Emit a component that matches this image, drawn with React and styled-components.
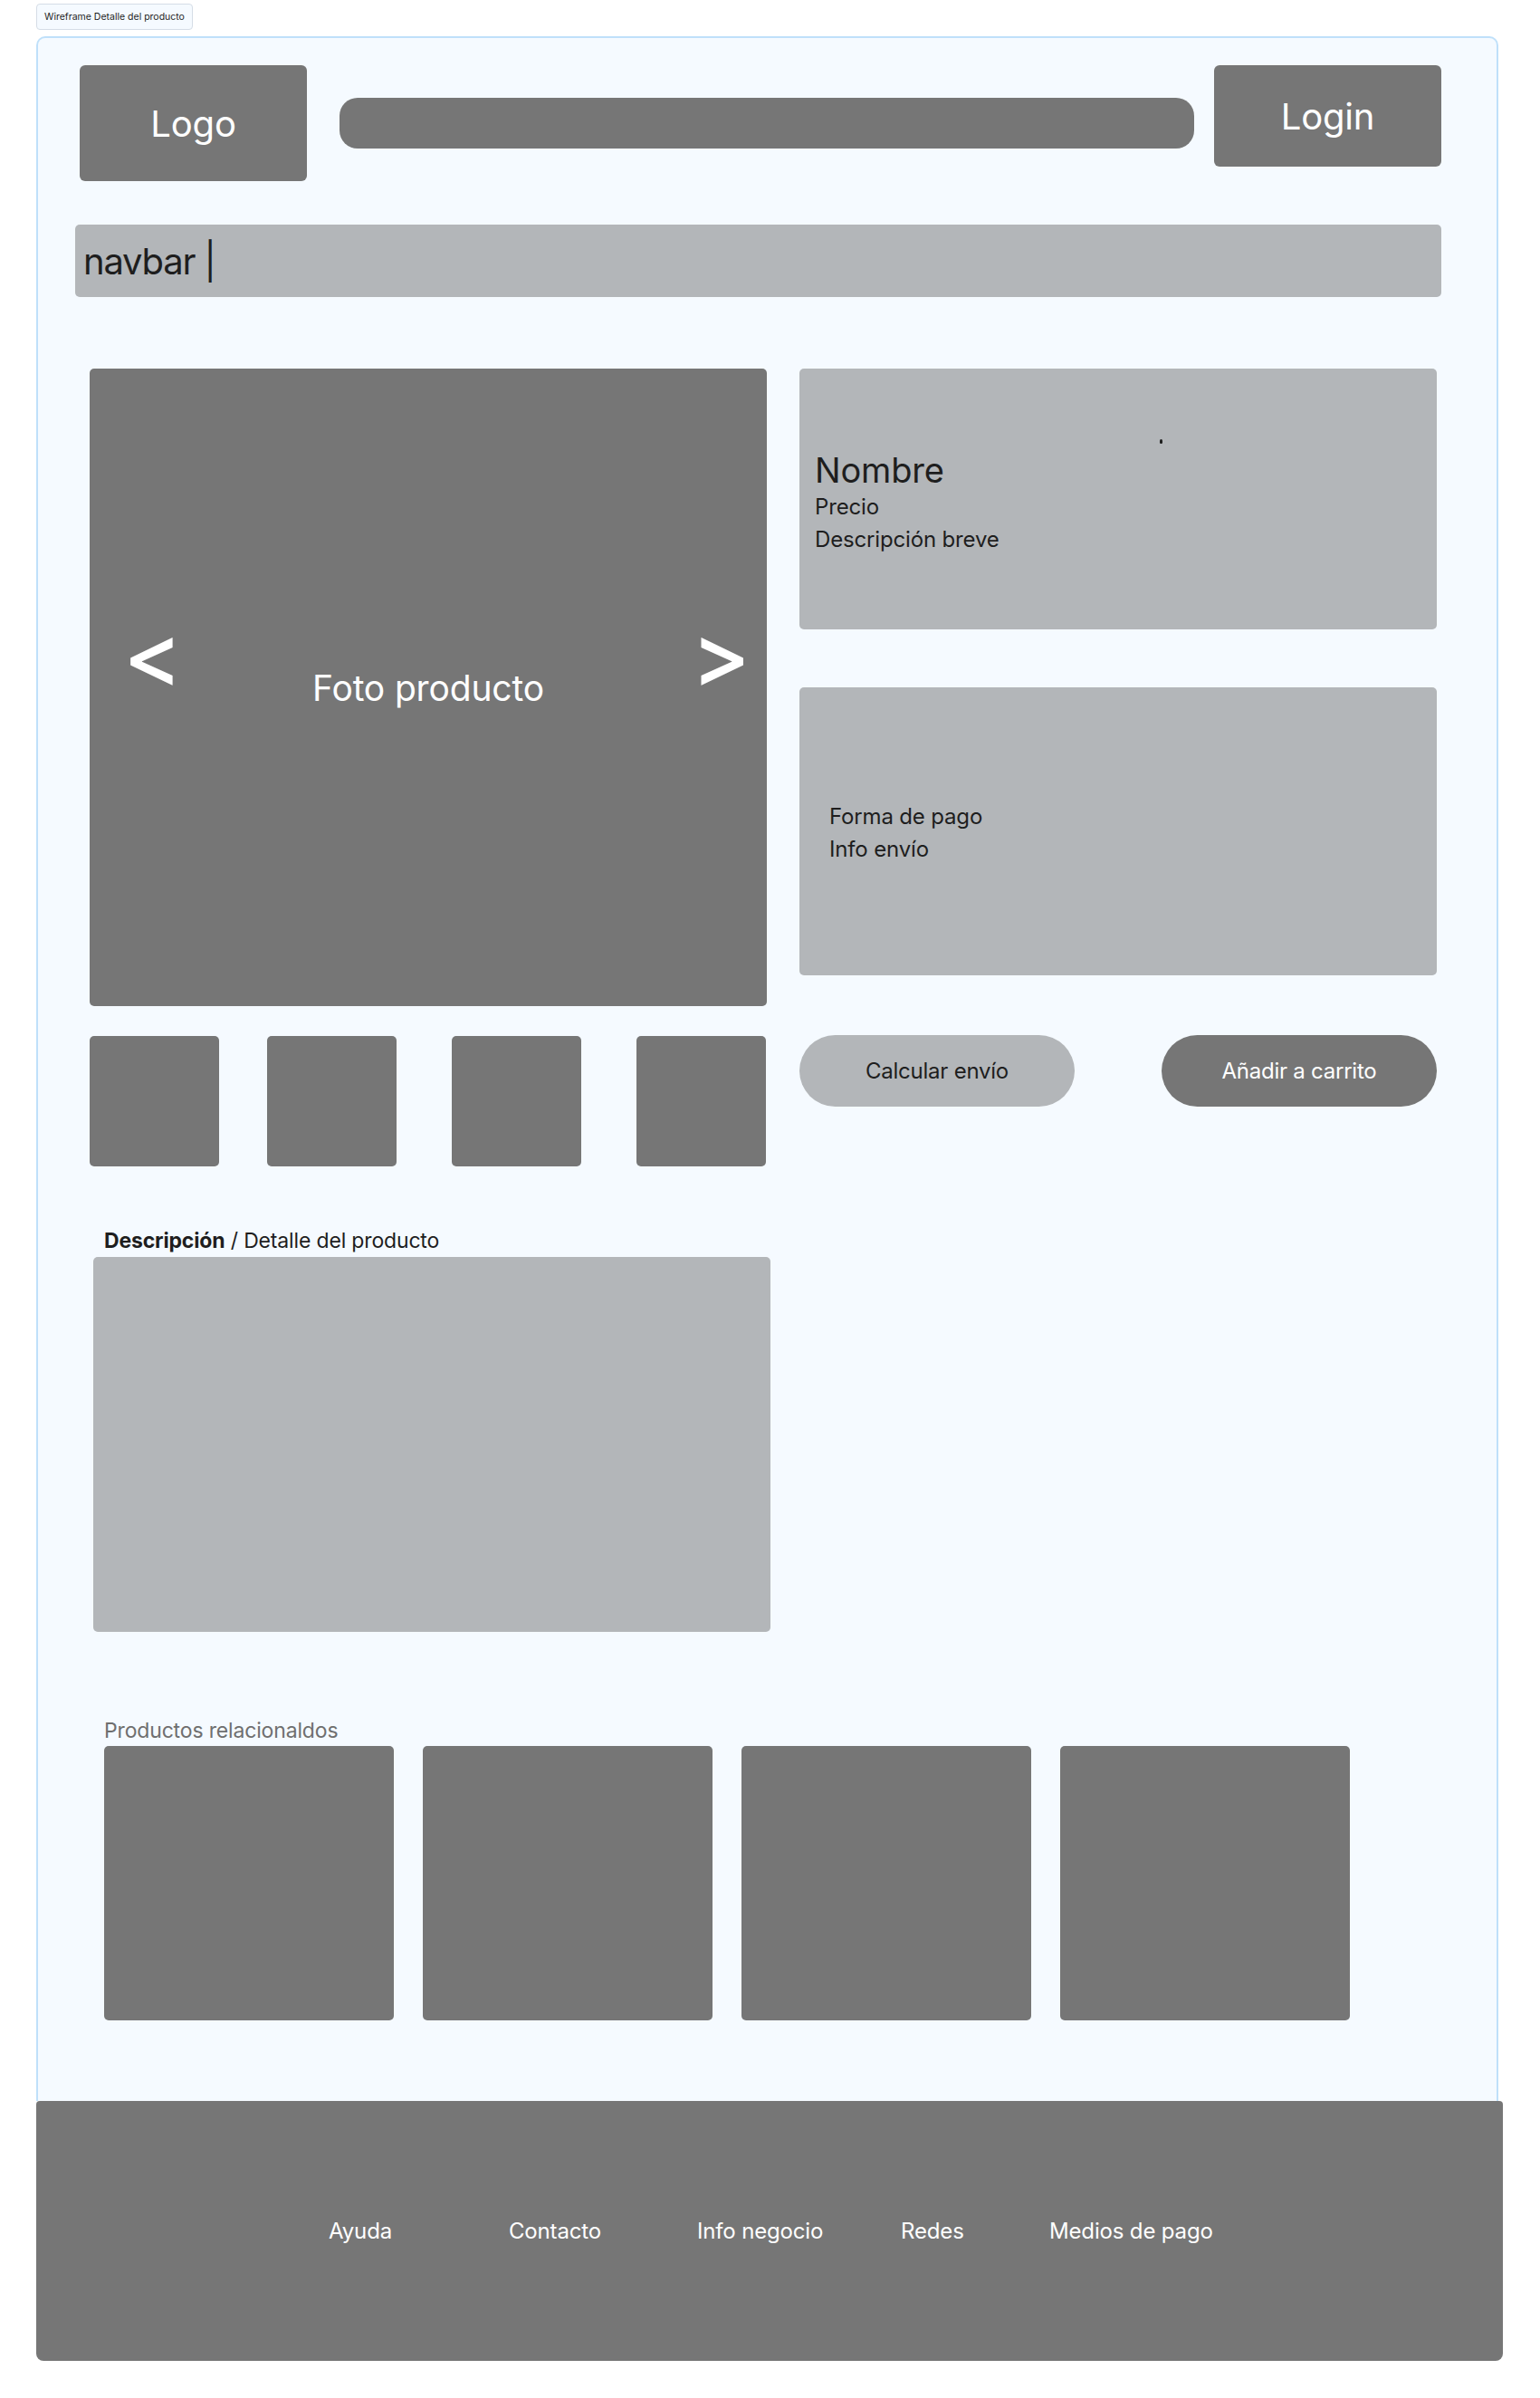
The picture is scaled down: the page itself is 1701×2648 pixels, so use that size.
import React from 'react';
import styled, { createGlobalStyle } from 'styled-components';

const GlobalStyle = createGlobalStyle`
  body {
    margin: 0;
    background: #ffffff;
    font-family: Inter, "Noto Sans", sans-serif;
    color: #1e1e1e;
    letter-spacing: -0.01em;
  }
`;

const Page = styled.div`
  width: 1701px;
  padding-top: 4px;
`;

const FrameLabel = styled.div`
  margin-left: 40px;
  width: 173px;
  height: 29px;
  box-sizing: border-box;
  display: flex;
  align-items: center;
  justify-content: center;
  font-size: 10.5px;
  letter-spacing: 0;
  color: #1e1e1e;
  background: #f5faff;
  border: 1px solid #d5dde6;
  border-radius: 4px;
`;

const Frame = styled.div`
  margin: 7px 0 0 40px;
  width: 1615px;
  box-sizing: border-box;
  background: #f5faff;
  border: 2px solid #bfe0fa;
  border-bottom: none;
  border-radius: 10px 10px 0 0;
  padding: 30px 61px 89px 41px;
`;

const HeaderRow = styled.div`
  display: flex;
  align-items: flex-start;
  margin-left: 5px;
`;

const DarkBlock = styled.div`
  background: #767676;
  color: #ffffff;
  border-radius: 6px;
  display: flex;
  align-items: center;
  justify-content: center;
  font-size: 40px;
  width: ${p => p.$w}px;
  height: ${p => p.$h}px;
  flex-shrink: 0;
`;

const SearchBar = styled.div`
  flex: 1;
  height: 56px;
  margin: 36px 22px 0 36px;
  background: #767676;
  border-radius: 20px;
`;

const Navbar = styled.div`
  margin-top: 48px;
  height: 80px;
  background: #b3b6b9;
  border-radius: 5px;
  display: flex;
  align-items: center;
  padding-left: 9px;
  font-size: 40px;
  letter-spacing: -0.03em;
  color: #1e1e1e;
`;

const ProductSection = styled.div`
  margin-top: 79px;
  padding-left: 16px;
  display: flex;
  gap: 36px;
  align-items: flex-start;
`;

const LeftColumn = styled.div`
  width: 748px;
  display: flex;
  flex-direction: column;
`;

const Photo = styled.div`
  position: relative;
  height: 704px;
  background: #767676;
  border-radius: 5px;
  display: flex;
  align-items: center;
  justify-content: center;
  color: #ffffff;
  font-size: 39px;
`;

const Arrow = styled.span`
  position: absolute;
  top: 267px;
  ${p => (p.$side === 'left' ? 'left: 37px;' : 'right: 18px;')}
  font-size: 98px;
  font-weight: 500;
  line-height: 100px;
  color: #ffffff;
`;

const Thumbs = styled.div`
  margin-top: 33px;
  display: flex;
`;

const Thumb = styled.div`
  width: 143px;
  height: 144px;
  margin-left: ${p => p.$ml}px;
  background: #767676;
  border-radius: 5px;
`;

const RightColumn = styled.div`
  width: 704px;
  display: flex;
  flex-direction: column;
`;

const InfoCard = styled.div`
  position: relative;
  box-sizing: border-box;
  height: ${p => p.$h}px;
  margin-top: ${p => p.$mt || 0}px;
  background: #b3b6b9;
  border-radius: 5px;
  padding: ${p => p.$pt}px 0 0 ${p => p.$pl}px;
`;

const Stray = styled.span`
  position: absolute;
  left: 398px;
  top: 78px;
  width: 3px;
  height: 5px;
  border-radius: 2px;
  background: #1e1e1e;
`;

const ProductName = styled.div`
  font-size: 38px;
  line-height: 46px;
`;

const InfoLine = styled.div`
  font-size: 24px;
  line-height: 36px;
`;

const Buttons = styled.div`
  margin-top: 66px;
  display: flex;
  justify-content: space-between;
`;

const PillButton = styled.button`
  width: 304px;
  height: 79px;
  border: none;
  border-radius: 40px;
  font-family: Inter, "Noto Sans", sans-serif;
  font-size: 24px;
  letter-spacing: -0.01em;
  background: ${p => (p.$dark ? '#767676' : '#b3b6b9')};
  color: ${p => (p.$dark ? '#ffffff' : '#1e1e1e')};
`;

const SectionTitle = styled.div`
  margin-top: ${p => p.$mt}px;
  padding-left: 32px;
  font-size: 23px;
  line-height: 28px;
  color: ${p => p.$color || '#1e1e1e'};

  strong {
    font-weight: 700;
  }
`;

const DescriptionBox = styled.div`
  margin: 4px 0 0 20px;
  width: 748px;
  height: 414px;
  background: #b3b6b9;
  border-radius: 5px;
`;

const Related = styled.div`
  margin-top: 3px;
  padding-left: 32px;
  display: flex;
  gap: 32px;
`;

const RelatedCard = styled.div`
  width: 320px;
  height: 303px;
  background: #767676;
  border-radius: 5px;
`;

const Footer = styled.footer`
  margin-left: 40px;
  width: 1620px;
  height: 287px;
  box-sizing: border-box;
  background: #767676;
  border-radius: 4px 4px 8px 8px;
  display: flex;
  align-items: center;
  padding-left: 323px;
`;

const FooterLink = styled.span`
  width: ${p => p.$w}px;
  flex-shrink: 0;
  font-size: 24px;
  color: #ffffff;
`;

const thumbMargins = [0, 53, 61, 61];

const footerLinks = [
  { label: 'Ayuda', w: 199 },
  { label: 'Contacto', w: 208 },
  { label: 'Info negocio', w: 225 },
  { label: 'Redes', w: 164 },
  { label: 'Medios de pago', w: 200 },
];

const App = () => {
  return (
    <Page>
      <GlobalStyle />
      <FrameLabel>Wireframe Detalle del producto</FrameLabel>
      <Frame>
        <HeaderRow>
          <DarkBlock $w={251} $h={128}>Logo</DarkBlock>
          <SearchBar />
          <DarkBlock $w={251} $h={112}>Login</DarkBlock>
        </HeaderRow>

        <Navbar>navbar |</Navbar>

        <ProductSection>
          <LeftColumn>
            <Photo>
              <Arrow $side="left">&lt;</Arrow>
              Foto producto
              <Arrow $side="right">&gt;</Arrow>
            </Photo>
            <Thumbs>
              {thumbMargins.map((ml, i) => (
                <Thumb key={i} $ml={ml} />
              ))}
            </Thumbs>
          </LeftColumn>

          <RightColumn>
            <InfoCard $h={288} $pt={89} $pl={17}>
              <Stray />
              <ProductName>Nombre</ProductName>
              <InfoLine>Precio</InfoLine>
              <InfoLine>Descripción breve</InfoLine>
            </InfoCard>
            <InfoCard $h={318} $mt={64} $pt={125} $pl={33}>
              <InfoLine>Forma de pago</InfoLine>
              <InfoLine>Info envío</InfoLine>
            </InfoCard>
            <Buttons>
              <PillButton>Calcular envío</PillButton>
              <PillButton $dark>Añadir a carrito</PillButton>
            </Buttons>
          </RightColumn>
        </ProductSection>

        <SectionTitle $mt={68}>
          <strong>Descripción</strong> / Detalle del producto
        </SectionTitle>
        <DescriptionBox />

        <SectionTitle $mt={95} $color="#6f6f6f">Productos relacionaldos</SectionTitle>
        <Related>
          {[0, 1, 2, 3].map(i => (
            <RelatedCard key={i} />
          ))}
        </Related>
      </Frame>
      <Footer>
        {footerLinks.map(link => (
          <FooterLink key={link.label} $w={link.w}>
            {link.label}
          </FooterLink>
        ))}
      </Footer>
    </Page>
  );
};

export default App;
